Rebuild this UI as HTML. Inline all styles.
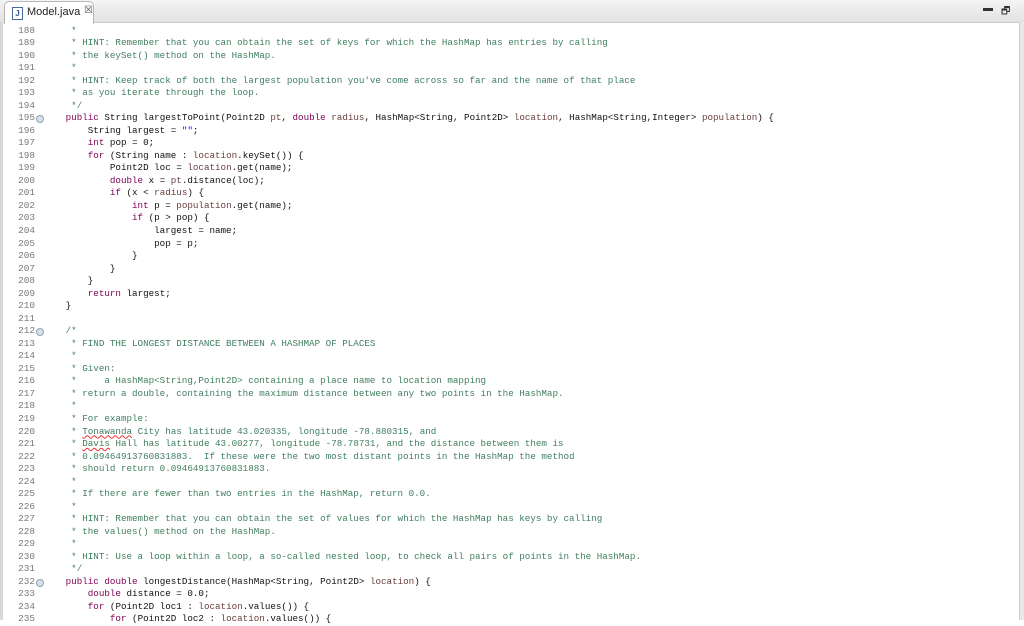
<!DOCTYPE html>
<html><head><meta charset="utf-8">
<style>
html,body{margin:0;padding:0;width:1024px;height:620px;overflow:hidden;background:#fff;}
.tabbar{position:absolute;left:0;top:0;width:1024px;height:22px;background:linear-gradient(#f4f4f4,#e2e2e2);border-bottom:1px solid #c8c8c8;}
.tab{position:absolute;left:4px;top:1px;width:88px;height:22px;background:#fff;border:1px solid #b8b8b8;border-bottom:none;border-radius:5px 5px 0 0;font:11px "Liberation Sans",sans-serif;color:#222;}
.tab .ic{position:absolute;left:7px;top:5px;width:9px;height:11px;border:1px solid #4a6a9a;background:#fff;font:bold 8px "Liberation Sans";color:#3a5a8a;text-align:center;line-height:11px;}
.tab .t{position:absolute;left:22px;top:4px;}
.tab .x{position:absolute;left:79px;top:3px;font-size:10px;color:#555;}
.lb{position:absolute;left:0;top:22px;width:3px;height:598px;background:#d8d8d8;}
.rb{position:absolute;left:1019px;top:22px;width:5px;height:598px;background:#e8e8e8;border-left:1px solid #ccc;}
.ctl{position:absolute;top:6px;font:10px "Liberation Sans";color:#333;}
.code{position:absolute;left:0;top:24.5px;width:1019px;}
.r{height:12.545px;position:relative;white-space:pre;font:9.22px/12.545px "Liberation Mono",monospace;color:#111;}
.n{position:absolute;left:0;width:35px;text-align:right;color:#787878;font-size:9.4px;}
.c{position:absolute;left:43.5px;}
.g{color:#3f7f5f}.k{color:#7f0055}.s{color:#2a00ff}.p{color:#6a3e3e}
.f{position:absolute;left:36px;top:3px;width:6px;height:6px;border:1px solid #8aa;border-radius:50%;background:#dde;}
.u{text-decoration:underline wavy #e33;text-decoration-thickness:1px;}
</style></head><body>
<div class="tabbar"><div class="tab"><span class="ic">J</span><span class="t">Model.java</span><span class="x">☒</span></div>
<span class="ctl" style="left:983px;top:3px">▬</span><span class="ctl" style="left:1001px;top:4px">🗗</span></div>
<div class="lb"></div><div class="rb"></div>
<div class="code">
<div class="r"><span class="n">188</span><span class="c g">     *</span></div>
<div class="r"><span class="n">189</span><span class="c g">     * HINT: Remember that you can obtain the set of keys for which the HashMap has entries by calling</span></div>
<div class="r"><span class="n">190</span><span class="c g">     * the keySet() method on the HashMap.</span></div>
<div class="r"><span class="n">191</span><span class="c g">     *</span></div>
<div class="r"><span class="n">192</span><span class="c g">     * HINT: Keep track of both the largest population you've come across so far and the name of that place</span></div>
<div class="r"><span class="n">193</span><span class="c g">     * as you iterate through the loop.</span></div>
<div class="r"><span class="n">194</span><span class="c g">     */</span></div>
<div class="r"><span class="n">195</span><span class="f"></span><span class="c">    <span class="k">public</span> String largestToPoint(Point2D <span class="p">pt</span>, <span class="k">double</span> <span class="p">radius</span>, HashMap&lt;String, Point2D&gt; <span class="p">location</span>, HashMap&lt;String,Integer&gt; <span class="p">population</span>) {</span></div>
<div class="r"><span class="n">196</span><span class="c">        String largest = <span class="s">""</span>;</span></div>
<div class="r"><span class="n">197</span><span class="c">        <span class="k">int</span> pop = 0;</span></div>
<div class="r"><span class="n">198</span><span class="c">        <span class="k">for</span> (String name : <span class="p">location</span>.keySet()) {</span></div>
<div class="r"><span class="n">199</span><span class="c">            Point2D loc = <span class="p">location</span>.get(name);</span></div>
<div class="r"><span class="n">200</span><span class="c">            <span class="k">double</span> x = <span class="p">pt</span>.distance(loc);</span></div>
<div class="r"><span class="n">201</span><span class="c">            <span class="k">if</span> (x &lt; <span class="p">radius</span>) {</span></div>
<div class="r"><span class="n">202</span><span class="c">                <span class="k">int</span> p = <span class="p">population</span>.get(name);</span></div>
<div class="r"><span class="n">203</span><span class="c">                <span class="k">if</span> (p &gt; pop) {</span></div>
<div class="r"><span class="n">204</span><span class="c">                    largest = name;</span></div>
<div class="r"><span class="n">205</span><span class="c">                    pop = p;</span></div>
<div class="r"><span class="n">206</span><span class="c">                }</span></div>
<div class="r"><span class="n">207</span><span class="c">            }</span></div>
<div class="r"><span class="n">208</span><span class="c">        }</span></div>
<div class="r"><span class="n">209</span><span class="c">        <span class="k">return</span> largest;</span></div>
<div class="r"><span class="n">210</span><span class="c">    }</span></div>
<div class="r"><span class="n">211</span><span class="c"></span></div>
<div class="r"><span class="n">212</span><span class="f"></span><span class="c g">    /*</span></div>
<div class="r"><span class="n">213</span><span class="c g">     * FIND THE LONGEST DISTANCE BETWEEN A HASHMAP OF PLACES</span></div>
<div class="r"><span class="n">214</span><span class="c g">     *</span></div>
<div class="r"><span class="n">215</span><span class="c g">     * Given:</span></div>
<div class="r"><span class="n">216</span><span class="c g">     *     a HashMap&lt;String,Point2D&gt; containing a place name to location mapping</span></div>
<div class="r"><span class="n">217</span><span class="c g">     * return a double, containing the maximum distance between any two points in the HashMap.</span></div>
<div class="r"><span class="n">218</span><span class="c g">     *</span></div>
<div class="r"><span class="n">219</span><span class="c g">     * For example:</span></div>
<div class="r"><span class="n">220</span><span class="c g">     * <span class="u">Tonawanda</span> City has latitude 43.020335, longitude -78.880315, and</span></div>
<div class="r"><span class="n">221</span><span class="c g">     * <span class="u">Davis</span> Hall has latitude 43.00277, longitude -78.78731, and the distance between them is</span></div>
<div class="r"><span class="n">222</span><span class="c g">     * 0.09464913760831883.  If these were the two most distant points in the HashMap the method</span></div>
<div class="r"><span class="n">223</span><span class="c g">     * should return 0.09464913760831883.</span></div>
<div class="r"><span class="n">224</span><span class="c g">     *</span></div>
<div class="r"><span class="n">225</span><span class="c g">     * If there are fewer than two entries in the HashMap, return 0.0.</span></div>
<div class="r"><span class="n">226</span><span class="c g">     *</span></div>
<div class="r"><span class="n">227</span><span class="c g">     * HINT: Remember that you can obtain the set of values for which the HashMap has keys by calling</span></div>
<div class="r"><span class="n">228</span><span class="c g">     * the values() method on the HashMap.</span></div>
<div class="r"><span class="n">229</span><span class="c g">     *</span></div>
<div class="r"><span class="n">230</span><span class="c g">     * HINT: Use a loop within a loop, a so-called nested loop, to check all pairs of points in the HashMap.</span></div>
<div class="r"><span class="n">231</span><span class="c g">     */</span></div>
<div class="r"><span class="n">232</span><span class="f"></span><span class="c">    <span class="k">public</span> <span class="k">double</span> longestDistance(HashMap&lt;String, Point2D&gt; <span class="p">location</span>) {</span></div>
<div class="r"><span class="n">233</span><span class="c">        <span class="k">double</span> distance = 0.0;</span></div>
<div class="r"><span class="n">234</span><span class="c">        <span class="k">for</span> (Point2D loc1 : <span class="p">location</span>.values()) {</span></div>
<div class="r"><span class="n">235</span><span class="c">            <span class="k">for</span> (Point2D loc2 : <span class="p">location</span>.values()) {</span></div>
</div>
</body></html>
